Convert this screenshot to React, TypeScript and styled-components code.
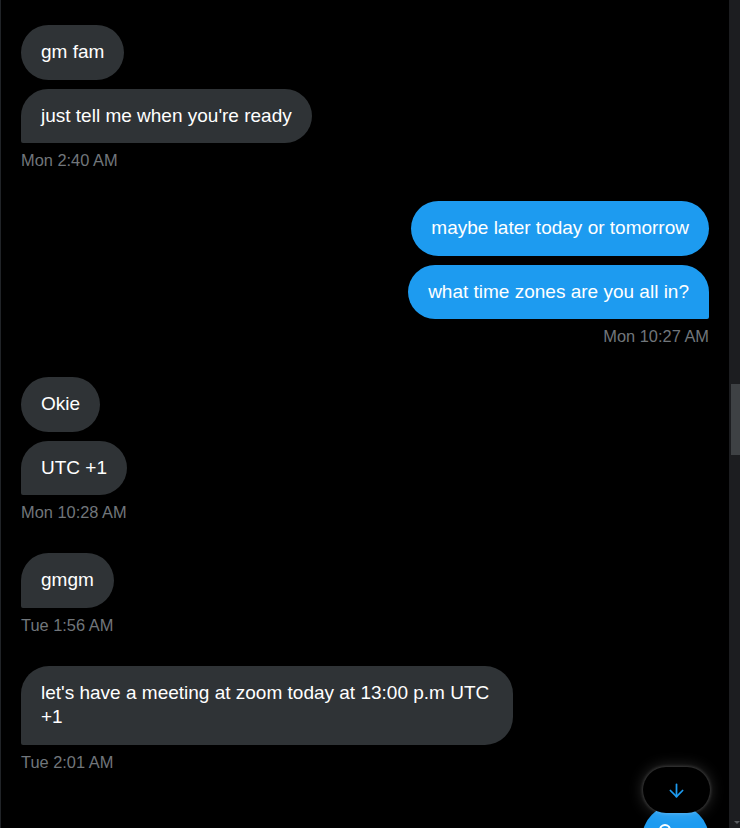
import React from "react";
import styled, { createGlobalStyle } from "styled-components";
import { ArrowDown } from "lucide-react";

const GlobalStyle = createGlobalStyle`
    html, body {
        margin: 0;
        padding: 0;
        background: #000;
        overflow: hidden;
    }
    * {
        box-sizing: border-box;
    }
`

const Screen = styled.div`
    display: flex;
    width: 740px;
    height: 828px;
    background: #000;
    overflow: hidden;
    font-family: "Liberation Sans", Arial, sans-serif;
`

const Conversation = styled.div`
    position: relative;
    flex: 1;
    display: flex;
    flex-direction: column;
    gap: 31px;
    padding: 25px 20px 0;
    border-left: 1px solid #202327;
`

const Group = styled.div<{ $mine?: boolean }>`
    display: flex;
    flex-direction: column;
    align-items: ${p => p.$mine ? "flex-end" : "flex-start"};
    gap: 9px;
`

const Bubble = styled.div<{ $mine?: boolean; $last?: boolean }>`
    max-width: 492px;
    padding: 15px 20px;
    border-radius: 28px;
    background: ${p => p.$mine ? "#1d9bf0" : "#2f3336"};
    color: #fff;
    font-size: 19px;
    line-height: 24.5px;
    ${p => p.$last && (p.$mine ? "border-bottom-right-radius: 2px;" : "border-bottom-left-radius: 2px;")}
`

const Timestamp = styled.div`
    margin-top: -2px;
    font-size: 16.4px;
    line-height: 20px;
    color: #71767b;
`

const ScrollTrack = styled.div`
    width: 11px;
    display: flex;
    flex-direction: column;
    background: #1c1d20;
`

const ScrollThumb = styled.div`
    margin: 384px 0 0 2px;
    height: 71px;
    background: #3e4144;
`

const ScrollArrow = styled.div`
    margin: auto 0 4px 5px;
    width: 0;
    height: 0;
    border-left: 3px solid transparent;
    border-right: 3px solid transparent;
    border-top: 3px solid #5b5e62;
`

const JumpButton = styled.button`
    position: absolute;
    right: 19px;
    top: 767px;
    z-index: 2;
    width: 67px;
    height: 46px;
    border: none;
    border-radius: 23px;
    background: #000;
    color: #1d9bf0;
    display: flex;
    align-items: center;
    justify-content: center;
    box-shadow: rgba(255, 255, 255, 0.2) 0 0 15px, rgba(255, 255, 255, 0.15) 0 0 3px 1px;
    cursor: pointer;
`

const ComposeButton = styled.button`
    position: absolute;
    right: 20px;
    top: 805px;
    z-index: 1;
    width: 67px;
    height: 67px;
    border: none;
    border-radius: 50%;
    background: #1d9bf0;
    color: #fff;
    display: flex;
    align-items: center;
    justify-content: center;
    padding: 0 21px 9px 0;
`

interface Message {
    text: string
}

interface Thread {
    mine?: boolean
    time: string
    messages: Message[]
}

const threads: Thread[] = [
    { time: "Mon 2:40 AM", messages: [{ text: "gm fam" }, { text: "just tell me when you're ready" }] },
    { mine: true, time: "Mon 10:27 AM", messages: [{ text: "maybe later today or tomorrow" }, { text: "what time zones are you all in?" }] },
    { time: "Mon 10:28 AM", messages: [{ text: "Okie" }, { text: "UTC +1" }] },
    { time: "Tue 1:56 AM", messages: [{ text: "gmgm" }] },
    { time: "Tue 2:01 AM", messages: [{ text: "let's have a meeting at zoom today at 13:00 p.m UTC +1" }] },
]

// only the top of the glyph peeks above the fold
function ComposeIcon() {
    return (
        <svg width="24" height="24" viewBox="0 0 24 24" fill="none" stroke="#fff" strokeWidth="2" strokeLinecap="round">
            <circle cx="12" cy="8" r="5" />
            <path d="M3 21c1-4 5-6 9-6s8 2 9 6" />
        </svg>
    )
}

export default function App() {
    return (
        <>
            <GlobalStyle />
            <Screen>
                <Conversation>
                    {threads.map((t, i) => (
                        <Group key={i} $mine={t.mine}>
                            {t.messages.map((m, j) => (
                                <Bubble key={j} $mine={t.mine} $last={j === t.messages.length - 1}>
                                    {m.text}
                                </Bubble>
                            ))}
                            <Timestamp>{t.time}</Timestamp>
                        </Group>
                    ))}
                    <JumpButton aria-label="Scroll to bottom">
                        <ArrowDown size={21} strokeWidth={2} />
                    </JumpButton>
                    <ComposeButton aria-label="New message">
                        <ComposeIcon />
                    </ComposeButton>
                </Conversation>
                <ScrollTrack>
                    <ScrollThumb />
                    <ScrollArrow />
                </ScrollTrack>
            </Screen>
        </>
    )
}
